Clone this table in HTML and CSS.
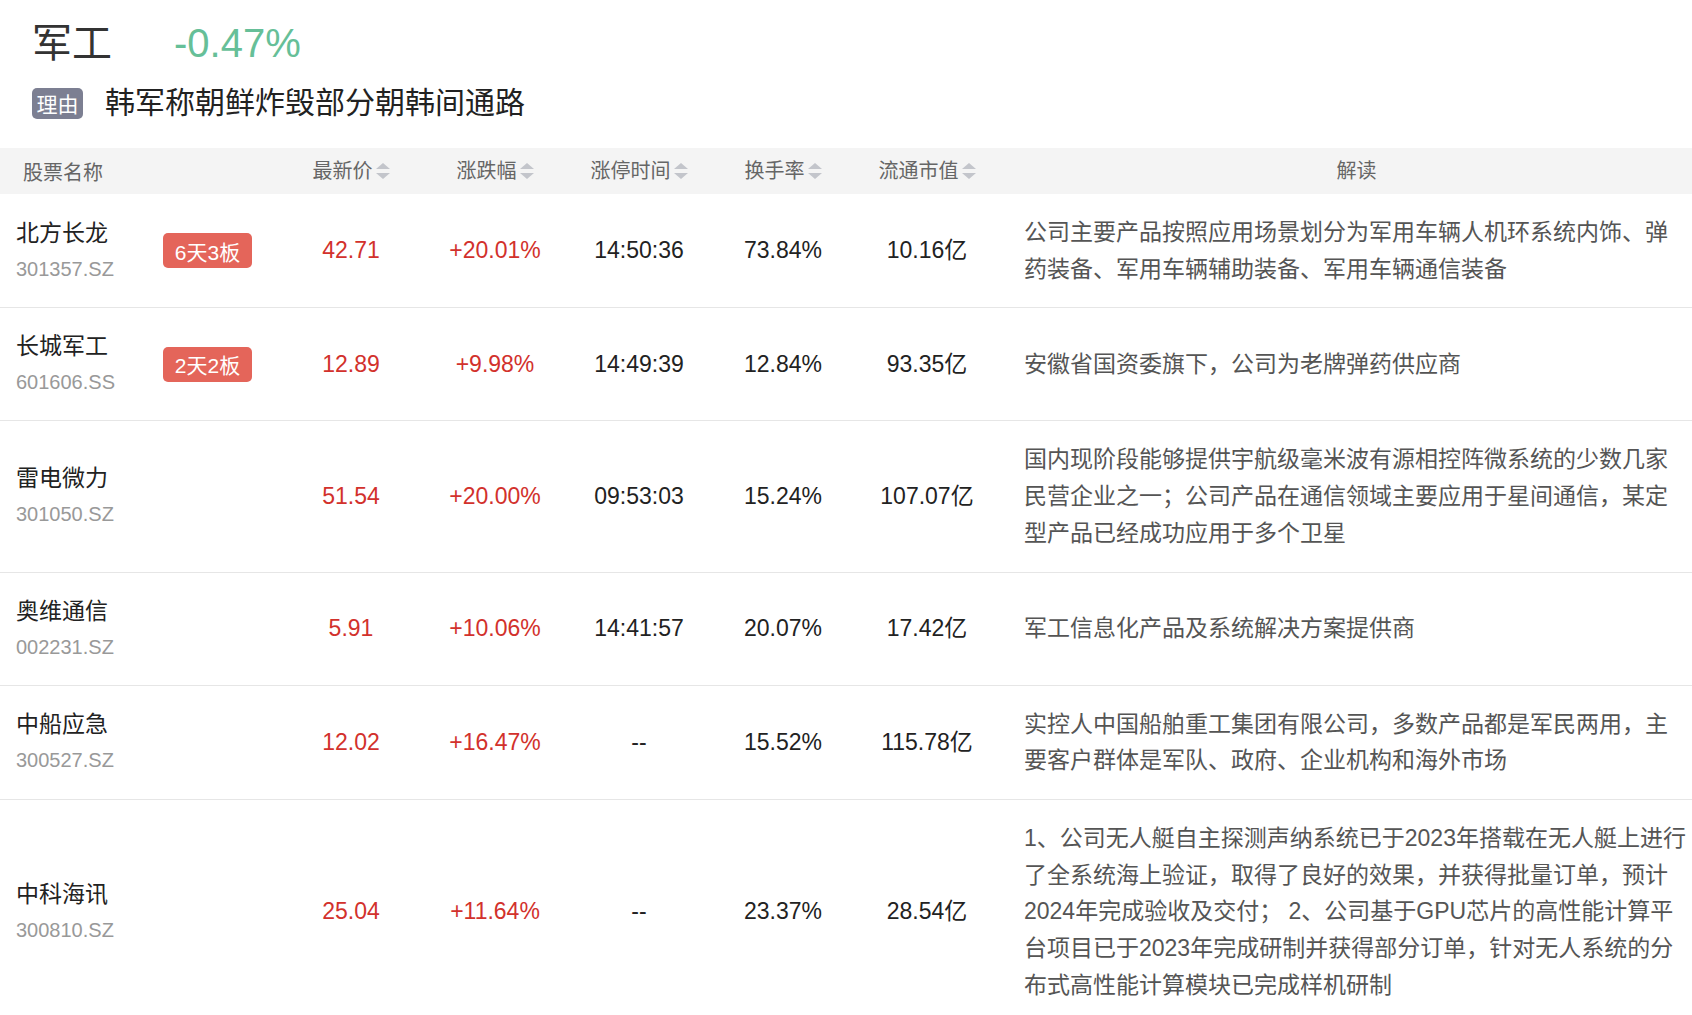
FILE: index.html
```html
<!DOCTYPE html>
<html lang="zh-CN">
<head>
<meta charset="utf-8">
<title>军工</title>
<link rel="stylesheet" href="styles.css">
</head>
<body>
<div class="top">
  <div class="title-row">
    <span class="title">军工</span>
    <span class="pct">-0.47%</span>
  </div>
  <div class="reason-row">
    <span class="tag">理由</span>
    <span class="reason">韩军称朝鲜炸毁部分朝韩间通路</span>
  </div>
</div>

<div class="table">
  <div class="row head">
    <div class="cell c-name">股票名称</div>
    <div class="cell c-num">最新价<span class="sort"></span></div>
    <div class="cell c-num">涨跌幅<span class="sort"></span></div>
    <div class="cell c-num">涨停时间<span class="sort"></span></div>
    <div class="cell c-num">换手率<span class="sort"></span></div>
    <div class="cell c-num">流通市值<span class="sort"></span></div>
    <div class="cell c-desc head-desc">解读</div>
  </div>

  <div class="row">
    <div class="cell c-name"><div class="info"><div class="name">北方长龙</div><div class="code">301357.SZ</div></div><span class="badge">6天3板</span></div>
    <div class="cell c-num red">42.71</div>
    <div class="cell c-num red">+20.01%</div>
    <div class="cell c-num">14:50:36</div>
    <div class="cell c-num">73.84%</div>
    <div class="cell c-num">10.16亿</div>
    <div class="cell c-desc">公司主要产品按照应用场景划分为军用车辆人机环系统内饰、弹药装备、军用车辆辅助装备、军用车辆通信装备</div>
  </div>

  <div class="row">
    <div class="cell c-name"><div class="info"><div class="name">长城军工</div><div class="code">601606.SS</div></div><span class="badge">2天2板</span></div>
    <div class="cell c-num red">12.89</div>
    <div class="cell c-num red">+9.98%</div>
    <div class="cell c-num">14:49:39</div>
    <div class="cell c-num">12.84%</div>
    <div class="cell c-num">93.35亿</div>
    <div class="cell c-desc">安徽省国资委旗下，公司为老牌弹药供应商</div>
  </div>

  <div class="row">
    <div class="cell c-name"><div class="info"><div class="name">雷电微力</div><div class="code">301050.SZ</div></div></div>
    <div class="cell c-num red">51.54</div>
    <div class="cell c-num red">+20.00%</div>
    <div class="cell c-num">09:53:03</div>
    <div class="cell c-num">15.24%</div>
    <div class="cell c-num">107.07亿</div>
    <div class="cell c-desc">国内现阶段能够提供宇航级毫米波有源相控阵微系统的少数几家民营企业之一；公司产品在通信领域主要应用于星间通信，某定型产品已经成功应用于多个卫星</div>
  </div>

  <div class="row">
    <div class="cell c-name"><div class="info"><div class="name">奥维通信</div><div class="code">002231.SZ</div></div></div>
    <div class="cell c-num red">5.91</div>
    <div class="cell c-num red">+10.06%</div>
    <div class="cell c-num">14:41:57</div>
    <div class="cell c-num">20.07%</div>
    <div class="cell c-num">17.42亿</div>
    <div class="cell c-desc">军工信息化产品及系统解决方案提供商</div>
  </div>

  <div class="row">
    <div class="cell c-name"><div class="info"><div class="name">中船应急</div><div class="code">300527.SZ</div></div></div>
    <div class="cell c-num red">12.02</div>
    <div class="cell c-num red">+16.47%</div>
    <div class="cell c-num">--</div>
    <div class="cell c-num">15.52%</div>
    <div class="cell c-num">115.78亿</div>
    <div class="cell c-desc">实控人中国船舶重工集团有限公司，多数产品都是军民两用，主要客户群体是军队、政府、企业机构和海外市场</div>
  </div>

  <div class="row">
    <div class="cell c-name"><div class="info"><div class="name">中科海讯</div><div class="code">300810.SZ</div></div></div>
    <div class="cell c-num red">25.04</div>
    <div class="cell c-num red">+11.64%</div>
    <div class="cell c-num">--</div>
    <div class="cell c-num">23.37%</div>
    <div class="cell c-num">28.54亿</div>
    <div class="cell c-desc">1、公司无人艇自主探测声纳系统已于2023年搭载在无人艇上进行了全系统海上验证，取得了良好的效果，并获得批量订单，预计2024年完成验收及交付； 2、公司基于GPU芯片的高性能计算平台项目已于2023年完成研制并获得部分订单，针对无人系统的分布式高性能计算模块已完成样机研制</div>
  </div>
</div>
</body>
</html>
```

FILE: styles.css
```css
html, body {
  margin: 0;
  padding: 0;
  background: #ffffff;
}
body {
  font-family: "Liberation Sans", "Noto Sans CJK SC", sans-serif;
  color: #222222;
}
.top {
  padding: 19px 0 0 32px;
}
.title-row {
  display: flex;
  align-items: center;
  height: 48px;
}
.title {
  font-size: 40px;
  line-height: 48px;
  color: #333333;
}
.pct {
  font-size: 40px;
  line-height: 48px;
  color: #66bf98;
  margin-left: 62px;
}
.reason-row {
  display: flex;
  align-items: center;
  height: 36px;
  margin-top: 18px;
}
.tag {
  display: inline-flex;
  align-items: center;
  justify-content: center;
  width: 51px;
  height: 31px;
  border-radius: 5px;
  background: #7c7f92;
  color: #ffffff;
  font-size: 21px;
}
.reason {
  font-size: 30px;
  line-height: 36px;
  color: #222222;
  margin-left: 22px;
}
.table {
  margin-top: 27px;
}
.row {
  display: grid;
  grid-template-columns: 279px repeat(5, 144px) 1fr;
  align-items: center;
  border-bottom: 1px solid #e6e6e6;
}
.row.head {
  height: 46px;
  background: #f4f4f4;
  border-bottom: none;
}
.head .cell {
  font-size: 20px;
  color: #666666;
}
.head .c-name {
  padding-left: 23px;
}
.head-desc {
  text-align: center;
}
.cell {
  font-size: 23px;
}
.c-num {
  display: flex;
  align-items: center;
  justify-content: center;
  line-height: 1;
  color: #222222;
}
.c-num.red {
  color: #d2312c;
}
.c-name {
  display: flex;
  align-items: center;
  padding-left: 16px;
}
.info {
  width: 147px;
  padding: 20px 0;
}
.name {
  font-size: 23px;
  line-height: 36px;
  color: #222222;
}
.code {
  font-size: 20px;
  line-height: 36px;
  color: #999999;
}
.badge {
  display: inline-flex;
  align-items: center;
  justify-content: center;
  width: 89px;
  height: 35px;
  border-radius: 5px;
  background: #e4655a;
  color: #ffffff;
  font-size: 21px;
}
.c-desc {
  padding: 20px 3px 20px 25px;
  line-height: 36.7px;
  color: #555555;
}
.head .c-desc {
  padding-top: 0;
  padding-bottom: 0;
  line-height: 46px;
}
.sort {
  display: inline-flex;
  flex-direction: column;
  gap: 4px;
  margin-left: 3px;
}
.sort::before,
.sort::after {
  content: "";
  width: 0;
  height: 0;
  border-left: 7px solid transparent;
  border-right: 7px solid transparent;
}
.sort::before {
  border-bottom: 6px solid #c3c5cb;
}
.sort::after {
  border-top: 6px solid #c3c5cb;
}
```
